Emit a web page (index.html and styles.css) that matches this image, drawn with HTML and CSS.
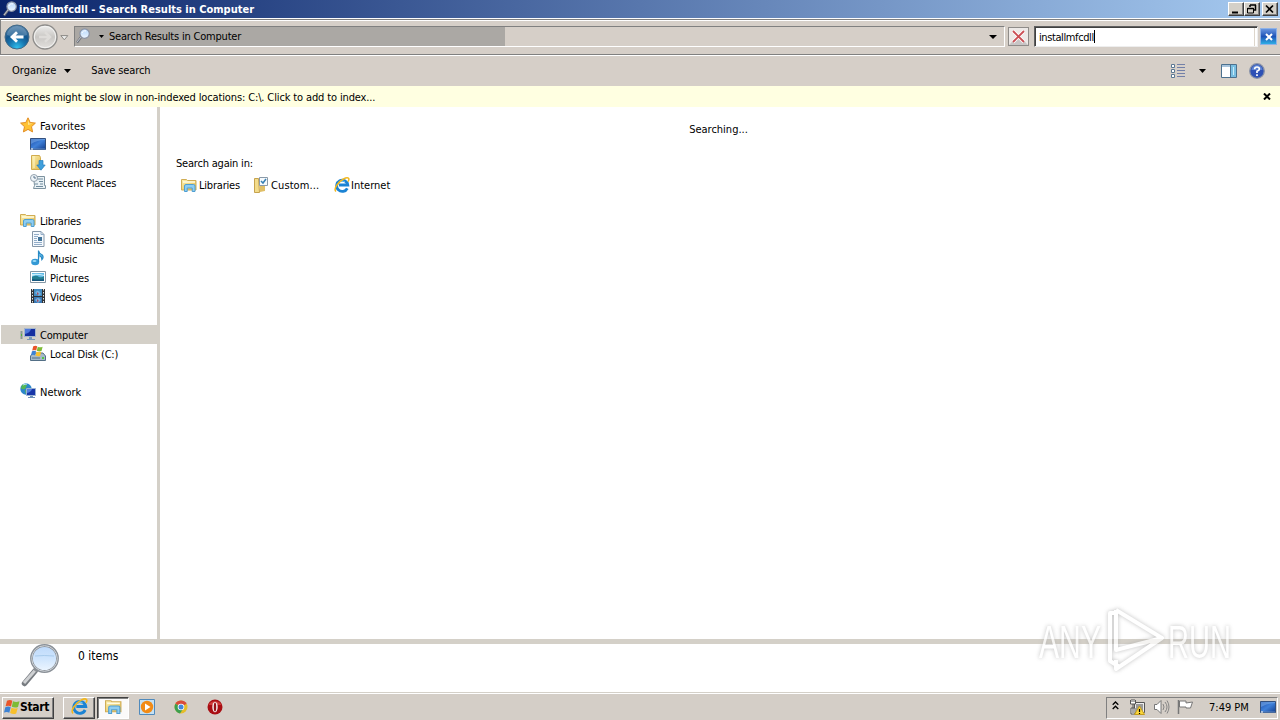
FILE: index.html
```html
<!DOCTYPE html>
<html lang="en">
<head>
<meta charset="utf-8">
<title>installmfcdll - Search Results in Computer</title>
<link rel="stylesheet" href="styles.css">
</head>
<body>
<svg class="defs" width="0" height="0">
<defs>
<linearGradient id="glass" x1="0" y1="0" x2="0" y2="1"><stop offset="0" stop-color="#bcd9fb"/><stop offset=".5" stop-color="#cfe5fd"/><stop offset="1" stop-color="#eef6ff"/></linearGradient>
<linearGradient id="blue" x1="0" y1="0" x2="1" y2="1"><stop offset="0" stop-color="#1c4fae"/><stop offset=".5" stop-color="#3f80d8"/><stop offset="1" stop-color="#123c8c"/></linearGradient>
<linearGradient id="gold" x1="0" y1="0" x2="1" y2="1"><stop offset="0" stop-color="#fbf0ae"/><stop offset="1" stop-color="#e3b94c"/></linearGradient>
<radialGradient id="back" cx=".5" cy=".95" r=".9"><stop offset="0" stop-color="#2fc0ee"/><stop offset=".4" stop-color="#1774ae"/><stop offset=".65" stop-color="#14578e"/><stop offset="1" stop-color="#4a7ba6"/></radialGradient>
<linearGradient id="fwd" x1="0" y1="0" x2="0" y2="1"><stop offset="0" stop-color="#efefee"/><stop offset=".5" stop-color="#c9c7c4"/><stop offset="1" stop-color="#e4e2df"/></linearGradient>
</defs>
<symbol id="lens" viewBox="0 0 16 16"><path d="M2 14.500 6.500 8.500" stroke="#70747c" stroke-width="2.4"/><path d="M2 14 6 9" stroke="#c4c8cf"/><circle cx="9.6" cy="5.6" r="4.7" fill="url(#glass)" stroke="#8b93a4" stroke-width="1.2"/><path d="M7 5a3 3 0 0 1 4-2" fill="none" stroke="#fff"/></symbol>
<symbol id="libs" viewBox="0 0 16 16"><path d="M.5 13V2.500h5l1 1h8.500V13z" fill="url(#gold)" stroke="#d0ad55"/><path d="M2 5h12" stroke="#fffbe0" stroke-width="1.500"/><path d="M3.500 14.500V9q0-1.500 1.500-1.500h7.500q1.500 0 1.500 1.500v5.500h-2.800v-3.500h-5v3.500z" fill="#8dcdf2" stroke="#4f9fd2"/></symbol>
<symbol id="ie" viewBox="0 0 16 16"><path d="M13.300 11.300A5.600 5.600 0 1 1 13.800 8H5" fill="none" stroke="#1b83d4" stroke-width="2.800"/><path d="M4 6.500A4.500 4.500 0 0 1 11 5" fill="none" stroke="#6cc5f5"/><path d="M2 14.500C-1 12 4.500 4.500 9.500 2s6.500-.5 4.500 2.600" fill="none" stroke="#f2b71d" stroke-width="1.500"/></symbol>
<symbol id="screen" viewBox="0 0 16 16"><path d="M.5 2.500h15v11H.5z" fill="url(#blue)" stroke="#33507e"/><path d="M1 8q6-4 14-4V3H1z" fill="#8dbcf0" opacity=".45"/><path d="M1 13h14" stroke="#5f86bf"/><path d="M1 13h2" stroke="#fff"/></symbol>
<symbol id="flag" viewBox="0 0 16 16"><path d="M3 1.800q3-1.600 5.300 0L7 7.400Q4.500 6 1.600 7.300z" fill="#e8552a"/><path d="M9 2.300q3 1.400 6.500 0L14 8q-3 1.200-6.200-.2z" fill="#7dbb35"/><path d="M1.300 8.300q3-1.500 5.400 0L5.300 13.700Q3 12.300 0 13.500z" fill="#3c82d4"/><path d="M7.500 8.800q3 1.300 6.200.2L12.200 14.500q-3 1.200-6.100-.4z" fill="#f7c02d"/></symbol>
</svg>

<header class="titlebar">
  <svg class="title-icon" width="16" height="16"><use href="#lens"/></svg>
  <span class="title">installmfcdll - Search Results in Computer</span>
  <div class="winbtns">
    <span class="winbtn"><svg width="14" height="12"><path d="M3 9.500h6" stroke="#000" stroke-width="2"/></svg></span>
    <span class="winbtn"><svg width="14" height="12"><path d="M5 2h6M5 2v2M10.500 2v5H9M2.500 5.500h6" fill="none" stroke="#000" stroke-width="1.500"/><path d="M2.500 5v5h6V5" fill="none" stroke="#000"/></svg></span>
    <span class="winbtn last"><svg width="14" height="12"><path d="m3 2.500 7 7m0-7-7 7" stroke="#000" stroke-width="1.700"/></svg></span>
  </div>
</header>

<nav class="navbar">
  <svg class="back" width="26" height="26"><circle cx="13" cy="13" r="12" fill="url(#back)" stroke="#456a86"/><path d="M3 11a10 9 0 0 1 20 0q-10 4-20 0z" fill="#fff" opacity=".2"/><path d="M19.500 13H8m5-4.800L8 13l5 4.800" fill="none" stroke="#fff" stroke-width="2.800"/></svg>
  <svg class="fwd" width="26" height="26"><circle cx="13" cy="13" r="12" fill="url(#fwd)" stroke="#8e8d8b" stroke-width="1.300"/><circle cx="13" cy="13" r="10.700" fill="none" stroke="#f4f4f3"/><path d="M7 13h11m-5-4.800 5 4.800-5 4.800" fill="none" stroke="#dedcd9" stroke-width="2.500"/></svg>
  <svg class="recent" width="9" height="6"><path d="M.8.600h7L4.300 4.800z" fill="#eee" stroke="#8b8985"/></svg>
  <div class="address">
    <div class="progress">
      <svg class="addr-icon" width="16" height="16"><use href="#lens"/></svg>
      <svg class="arrow" width="5" height="3"><path d="M0 0h5L2.500 3z"/></svg>
      <span class="t-addr">Search Results in Computer</span>
    </div>
    <svg class="addr-drop" width="8" height="4"><path d="M0 0h8L4 4z"/></svg>
  </div>
  <span class="stop"><svg width="19" height="17"><path d="M0 17 9.500 7l9.500 10z" fill="#c8c5c5"/><path d="m4 3 11 11m0-11L4 14" stroke="#fff" stroke-width="3.500"/><path d="m4 3 11 11m0-11L4 14" stroke="#cb4f55" stroke-width="1.900"/></svg></span>
  <div class="search"><span class="t-query">installmfcdll</span><i class="caret"></i></div>
  <span class="clear"><svg width="16" height="16"><path d="m5 5 6 6m0-6-6 6" stroke="#fff" stroke-width="2"/></svg></span>
</nav>

<div class="toolbar">
  <span class="t-org">Organize</span>
  <svg class="org-arrow" width="7" height="4"><path d="M0 0h7L3.500 4z"/></svg>
  <span class="t-save">Save search</span>
  <div class="tools">
    <svg width="15" height="16"><path d="M1.500 1.500h3v3h-3zm0 5h3v3h-3zm0 5h3v3h-3z" fill="#fff" stroke="#5c7893"/><path d="M7 1.500h8M7 4.500h8M7 7.500h8M7 10.500h8M7 13.500h8" stroke="#7380a8"/></svg>
    <svg class="view-arrow" width="7" height="4"><path d="M0 0h7L3.500 4z"/></svg>
    <svg width="17" height="14"><path d="M.5.500h15v13H.5z" fill="#fff" stroke="#4c718f"/><path d="M1 2h9" stroke="#a8c4dc" stroke-width="2"/><path d="M10 1h5v12h-5z" fill="#79bfe2"/><path d="M9.500 1v12" stroke="#4c718f"/><path d="M12.500 3v8" stroke="#c9ebfa"/></svg>
    <svg class="help" width="16" height="16"><circle cx="8" cy="8" r="7.300" fill="#2d50b5" stroke="#8993a8" stroke-width="1.300"/><path d="M2.500 7a5.500 5 0 0 1 11 0z" fill="#7ca1e5" opacity=".6"/><path d="M5.600 6.200Q5.700 4 8 4t2.400 2Q10.400 7.300 8 8.200V10m0 1.200v1.700" fill="none" stroke="#fff" stroke-width="1.700"/></svg>
  </div>
</div>

<div class="notice">
  <span class="t-notice">Searches might be slow in non-indexed locations: C:\. Click to add to index...</span>
  <svg width="8" height="7"><path d="m1 .500 6 6m0-6-6 6" stroke="#000" stroke-width="2"/></svg>
</div>

<main class="body">
  <aside class="tree">
    <div class="row"><svg width="16" height="16"><path d="m8 .800 2.200 4.700 5.200.600-3.900 3.600 1.100 5.200L8 12.400l-4.600 2.500 1.100-5.200L.6 6.100l5.200-.6z" fill="#ffc233" stroke="#e28d25"/><path d="m8 3 1.200 3.500H13L8 8z" fill="#ffe694"/></svg><span class="fav">Favorites</span></div>
    <div class="row sub"><svg width="16" height="16"><use href="#screen"/></svg><span>Desktop</span></div>
    <div class="row sub"><svg width="16" height="16"><path d="M1.500.500h8l1 2v12h-9z" fill="url(#gold)" stroke="#d2ac4e"/><path d="M4 1v12" stroke="#fff6c6"/><path d="M9 5.500h4V10h2.200L11 15.200 6.800 10H9z" fill="#3f9fdc" stroke="#2680bd" stroke-width=".7"/></svg><span>Downloads</span></div>
    <div class="row sub"><svg width="16" height="16"><path d="M3.500 2.500h11v9h1v3h-12l1-3z" fill="#e9f1f5" stroke="#7d929f"/><path d="M7 5h6M9 7.500h4M5 10h3M10 10h3M6 12.500h7" stroke="#708b9d"/><circle cx="4" cy="4" r="3.500" fill="#eef4f8" stroke="#93a1ad"/><path d="M4 2v2h2" fill="none" stroke="#58738b"/></svg><span>Recent Places</span></div>
    <div class="row gap"><svg width="16" height="16"><use href="#libs"/></svg><span>Libraries</span></div>
    <div class="row sub"><svg width="16" height="16"><path d="M2.500.500h8.500l3 3v12H2.500z" fill="#f5f9fd" stroke="#8697a8"/><path d="M11 .5v3h3M4 3.500h5M4 5.500h4M4 7.500h3M4 9.500h3M4 11.500h8M4 13.500h8" fill="none" stroke="#93adc8"/><path d="M8 6h4v4H8z" fill="#42749a"/></svg><span class="docs">Documents</span></div>
    <div class="row sub"><svg width="16" height="16"><ellipse cx="5.200" cy="12" rx="4" ry="3.200" fill="#3499d5"/><path d="M8.500 12V.500q.5 3 3.400 4.300 2.400 2.200 0 4.700 0-3-2.200-3.800" fill="#65bce8" stroke="#298ac5" stroke-width="1.200"/><ellipse cx="4.500" cy="11" rx="2" ry="1" fill="#9bdbf7"/></svg><span>Music</span></div>
    <div class="row sub"><svg width="16" height="16"><path d="M.5 2.500h15v11H.5z" fill="#fff" stroke="#8497a5"/><path d="M2 4h12v8H2z" fill="#61b9e5"/><path d="M2 8q4-3 7 0 3 1 5-1v5H2z" fill="#237e91"/><path d="M2 10q6 1 12 0v2H2z" fill="#15577e"/><path d="M2 5q6-1 12 1v1q-6-2-12 0z" fill="#c8eefb"/></svg><span class="pics">Pictures</span></div>
    <div class="row sub"><svg width="16" height="16"><path d="M1 1h14v14H1z" fill="#303235"/><path d="M4 1h8v7H4z" fill="#428cc2"/><path d="M4 9h8v6H4z" fill="#3a78b4"/><path d="M5 5q3-5 6 1l-2 2zM5 12q3-4 6 0l-3 3z" fill="#76b3dd"/><path d="m7 4 2 2-2 1zm0 7 2 2-2 1z" fill="#a74c65"/><path d="M2.500 1v14M13.500 1v14" stroke="#e2e8e8" stroke-dasharray="1.500 1.500"/></svg><span>Videos</span></div>
    <div class="row gap selected"><svg width="16" height="16"><path d="M1.500 5v8" stroke="#8a9896" stroke-width="2"/><path d="M1.500 8v2" stroke="#55b43e" stroke-width="1"/><path d="M4.500 2.500h11v8h-11z" fill="#152fa0" stroke="#a3b6ce"/><path d="M5 3h6q-1 4-6 5z" fill="#4d77dd"/><path d="M9 11h3v2h3v1H7v-1h2z" fill="#7998ba"/></svg><span>Computer</span></div>
    <div class="row sub"><svg width="16" height="16"><path d="M.5 11 3 8h10l2.500 3v4.500H.5z" fill="#a5b9c9" stroke="#536f86"/><path d="M2 13h8" stroke="#536f86"/><path d="M12 13h2" stroke="#52c842" stroke-width="2"/><svg x="1" y="0" width="12" height="12"><use href="#flag"/></svg></svg><span>Local Disk (C:)</span></div>
    <div class="row gap"><svg width="16" height="16"><circle cx="6" cy="6" r="5.700" fill="#2c86ca"/><path d="M2 2q3-2 5 0L5 6Q2 7 1 5zM5 7l4 1-3 4z" fill="#54b755"/><path d="M3 2q2-1 4-1" stroke="#b6e4fa" fill="none"/><path d="M6.500 5.500h9v7h-9z" fill="#1736a8" stroke="#9bb3d2"/><path d="M7 6h5q-1 3-5 4z" fill="#517ede"/><path d="M10 13h3v1h2v1H8v-1h2z" fill="#6d91b8"/></svg><span class="net-label">Network</span></div>
  </aside>
  <section class="results">
    <div class="searching">Searching...</div>
    <div class="again">Search again in:</div>
    <div class="places">
      <div class="place libraries"><svg width="16" height="16"><use href="#libs"/></svg><span>Libraries</span></div>
      <div class="place custom"><svg width="16" height="16"><path d="M1.500 1.500h4l1 14h-5z" fill="#f3dc8b" stroke="#c6a34e"/><path d="M6 2h6v12l-5 1z" fill="#e0bf67"/><path d="M6.500.500h8v8h-8z" fill="#f6fafd" stroke="#8a9aa9"/><path d="m8 4 2 2 3-4" fill="none" stroke="#3680b5" stroke-width="1.500"/></svg><span>Custom...</span></div>
      <div class="place internet"><svg width="16" height="16"><use href="#ie"/></svg><span>Internet</span></div>
    </div>
  </section>
</main>

<section class="details">
  <svg width="38" height="44"><path d="M3.500 39.500 14 27" stroke="#777b80" stroke-width="5.500" stroke-linecap="round"/><path d="m3 39 11-12.500" stroke="#cfd1d3" stroke-width="3"/><path d="m14 27 4-5" stroke="#8c9094" stroke-width="4"/><circle cx="23.500" cy="14.500" r="13" fill="url(#glass)" stroke="#8a9097" stroke-width="2.800"/><circle cx="23.500" cy="14.500" r="12.800" fill="none" stroke="#d0d5da"/><path d="M14 12q9-1 19 0" stroke="#a8cbec" fill="none"/></svg>
  <span class="t-items">0 items</span>
</section>

<footer class="taskbar">
  <div class="start"><svg width="16" height="16"><use href="#flag"/></svg><span>Start</span></div>
  <div class="task ie"><svg width="17" height="17"><use href="#ie"/></svg></div>
  <div class="task active"><svg width="17" height="17"><use href="#libs"/></svg></div>
  <svg class="launch" width="16" height="16"><path d="M.5.500h15v15H.5z" fill="#c5e1f4" stroke="#508abc"/><circle cx="8" cy="8" r="6.200" fill="#f28b16"/><path d="M6 4.500v7L11.500 8z" fill="#fff"/></svg>
  <svg class="launch" width="16" height="16"><circle cx="8" cy="8" r="6.500" fill="#e5bd2a"/><path d="M8 8 2.400 4.700a6.500 6.500 0 0 1 11.200 0z" fill="#d94b3b"/><path d="M8 8 2.400 4.700A6.500 6.500 0 0 0 7 14.400L10 10z" fill="#3c9f4f"/><circle cx="8" cy="8" r="3.300" fill="#fff"/><circle cx="8" cy="8" r="2.500" fill="#4387da"/></svg>
  <svg class="launch" width="16" height="16"><circle cx="8" cy="8" r="7.500" fill="#a90e13"/><path d="M1.500 6a7 6 0 0 1 13 0z" fill="#cf3b39"/><ellipse cx="8" cy="8" rx="2.700" ry="5.200" fill="#f5efee"/><ellipse cx="8" cy="8" rx="1.200" ry="4.500" fill="#961116"/></svg>
  <div class="tray">
    <svg class="chev" width="7" height="9"><path d="m.7 3.800 2.800-2.800 2.800 2.800M.7 8l2.800-2.800L6.300 8" fill="none" stroke="#000" stroke-width="1.300"/></svg>
    <svg class="net" width="16" height="16"><path d="M5.500 3.500h10v10h-10z" fill="#eee" stroke="#555"/><path d="M7 5h7v7H7z" fill="#9a9a99"/><path d="M1.500 1v4h5V1M3 0v3M5 0v3M4 5v9M2 9h4v6H2z" fill="#fff" stroke="#555"/><path d="m10.500 7 5 8.500h-10z" fill="#fbd63a" stroke="#c39c1f"/><path d="M10.500 10v3m0 1v1" stroke="#000" stroke-width="1.200"/></svg>
    <svg class="vol" width="17" height="16"><path d="M1.500 5.500h2.500l4-4v13l-4-4H1.500z" fill="#fff" stroke="#777"/><path d="M10 5q2 3 0 6M12 3q4 5 0 10M14 1.500q4 6.500 0 13" fill="none" stroke="#858585"/></svg>
    <svg class="action" width="17" height="16"><path d="M1.500 1v14" stroke="#777" stroke-width="1.500"/><path d="M2.500 2h6.500v2l6.500-1-2 6H9V8H2.500z" fill="#fff" stroke="#777"/></svg>
    <span class="clock">7:49 PM</span>
    <svg class="show" width="16" height="16"><use href="#screen"/></svg>
  </div>
</footer>

<div class="watermark">
  <svg width="240" height="90">
    <g fill="none" stroke="#fff" stroke-width="4" stroke-linejoin="round" class="glow"><path d="M88 11h-8v48l8 5M86 8l46 28-46 31v-9M86 8v40l46-12"/></g>
    <g class="wm-text"><text x="9" y="56" textLength="62" lengthAdjust="spacingAndGlyphs">ANY</text><text x="138" y="56" textLength="63" lengthAdjust="spacingAndGlyphs">RUN</text></g>
  </svg>
</div>
</body>
</html>
```
FILE: styles.css
```css
* { box-sizing: border-box; }
body {
  margin: 0; width: 1280px; height: 720px; overflow: hidden;
  display: flex; flex-direction: column; background: #fff; color: #000;
  font: 11px/14px "DejaVu Sans Condensed", "DejaVu Sans", sans-serif;
  font-stretch: condensed;
  letter-spacing: -0.2px; white-space: nowrap;
}
svg { display: block; flex: none; }
.defs { position: absolute; }

.titlebar { height: 18px; flex: none; display: flex; align-items: center; padding: 0 2px 0 3px; background: linear-gradient(90deg, #0a246a, #a6caf0); }
.title { padding-top: 1px; color: #fff; font-weight: bold; letter-spacing: 0; }
.title-icon { margin-left: -1px; margin-right: 1px; }
.winbtns { margin-left: auto; display: flex; }
.winbtn { width: 16px; height: 14px; background: #d4d0c8; border: 1px solid; border-color: #fff #404040 #404040 #fff; box-shadow: inset -1px -1px #808080; }
.winbtn.last { margin-left: 2px; }

.navbar { height: 36px; flex: none; display: flex; align-items: center; margin-top: 1px; padding: 0 1px 1px 3px; background: #d6cfc8; border-top: 1px solid #808080; border-bottom: 1px solid #808080; border-left: 1px solid #808080; box-shadow: inset 0 1px #fff; }
.fwd { margin-left: 2px; }
.recent { margin-left: 2px; margin-top: 2px; }
.address { width: 931px; height: 21px; margin-left: 5px; display: flex; align-items: center; border: 1px solid; border-color: #808080 #fff #fff #808080; }
.progress { width: 430px; height: 19px; display: flex; align-items: center; background: #aba8a4; }
.addr-icon { margin-top: -2px; }
.arrow { margin-left: 8px; }
.t-addr { margin-left: 5px; }
.addr-drop { margin-left: auto; margin-right: 7px; }
.stop { width: 21px; height: 19px; margin-left: 3px; background: #ede9e7; border: 1px solid #8f8c89; }
.search { width: 224px; height: 21px; margin-left: 5px; padding-left: 4px; display: flex; align-items: center; background: #fff; border: 1px solid; border-color: #606060 #eee #eee #606060; box-shadow: inset 1px 1px #404040, inset -2px 0 #fff, inset -3px 0 #ddd6cc; }
.t-query { letter-spacing: -0.4px; padding-top: 2px; }
.caret { width: 1px; height: 13px; background: #000; }
.clear { width: 17px; height: 17px; margin-left: 2px; background: linear-gradient(#6794df, #1e54b7 50%, #2eaee5); border: 1px solid #8fb2e6; }

.toolbar { height: 31px; flex: none; display: flex; align-items: center; padding-left: 12px; background: #d6cfc8; border-top: 1px solid #fff; }
.org-arrow { margin-left: 8px; margin-top: -1px; }
.t-org { letter-spacing: 0; }
.t-save { margin-left: 20px; letter-spacing: -0.1px; }
.tools { margin-left: auto; margin-right: 15px; margin-top: -1px; display: flex; align-items: center; }
.view-arrow { margin: 0 15px 0 14px; }
.help { margin-left: 11px; }

.notice { height: 21px; flex: none; display: flex; align-items: center; justify-content: space-between; padding: 0 9px 0 6px; background: #ffffe1; }
.t-notice { letter-spacing: -0.13px; padding-top: 2px; }

.body { height: 532px; flex: none; display: flex; }
.tree { width: 160px; padding: 9px 0 0 1px; border-right: 3px solid #d4d0c8; }
.row { height: 19px; display: flex; align-items: center; padding-left: 19px; gap: 4px; }
.row svg { margin-top: -1px; }
.row span { padding-top: 2px; }
.row.sub { padding-left: 29px; }
.row.gap { margin-top: 19px; }
.fav { letter-spacing: 0.1px; }
.docs { letter-spacing: -0.25px; }
.pics, .net-label { letter-spacing: 0; }
.selected { background: #d4d0c8; }
.results { flex: 1; padding: 15px 0 0 16px; }
.searching { width: 1085px; text-align: center; letter-spacing: 0; padding-top: 1px; }
.again { margin-top: 20px; }
.places { display: flex; margin-top: 7px; padding-left: 5px; }
.place { display: flex; align-items: center; height: 16px; gap: 2px; }
.place svg { margin-top: -2px; }
.place.libraries { width: 72px; }
.place.custom { width: 81px; letter-spacing: 0.1px; }
.place.internet { gap: 1px; letter-spacing: 0; }

.details { height: 54px; flex: none; display: flex; padding-left: 21px; border-top: 5px solid #d4d0c8; border-bottom: 1px solid #d4d0c8; }
.t-items { margin: 5px 0 0 19px; font-size: 12px; letter-spacing: 0; }

.taskbar { height: 27px; flex: none; display: flex; align-items: center; padding: 1px 0 0 2px; background: #d4cec7; border-top: 1px solid #fff; }
.taskbar svg { position: relative; top: -1px; }
.start { width: 52px; height: 22px; display: flex; align-items: center; padding-left: 1px; font-weight: bold; font-size: 12px; letter-spacing: -0.35px; border: 1px solid; border-color: #fff #404040 #404040 #fff; box-shadow: inset -1px -1px #808080; }
.start span { margin-top: -2px; }
.task { width: 32px; height: 22px; display: flex; align-items: center; justify-content: center; border: 1px solid; border-color: #fff #404040 #404040 #fff; box-shadow: inset -1px -1px #808080; }
.task.ie { margin-left: 9px; }
.task.active { margin-left: 2px; background: #fbfaf9; border-color: #404040 #fff #fff #404040; box-shadow: inset 1px 1px #808080; }
.launch { margin-left: 18px; }
.task + .launch { margin-left: 10px; }
.tray { width: 172px; height: 22px; margin-left: auto; margin-right: 2px; display: flex; align-items: center; border: 1px solid; border-color: #808080 #fff #fff #808080; }
.chev { margin-left: 5px; margin-top: -2px; }
.net { margin-left: 10px; }
.vol { margin-left: 8px; }
.action { margin-left: 7px; }
.clock { margin-left: 15px; width: 42px; letter-spacing: 0; }
.show { margin-left: auto; margin-right: 1px; }

.watermark { position: absolute; left: 1030px; top: 602px; width: 240px; height: 90px; opacity: .75; }
.glow, .wm-text { filter: drop-shadow(0 0 2px #aaa); }
.wm-text { font: 47px/56px "Liberation Sans", sans-serif; fill: #fff; letter-spacing: 0; }
```
